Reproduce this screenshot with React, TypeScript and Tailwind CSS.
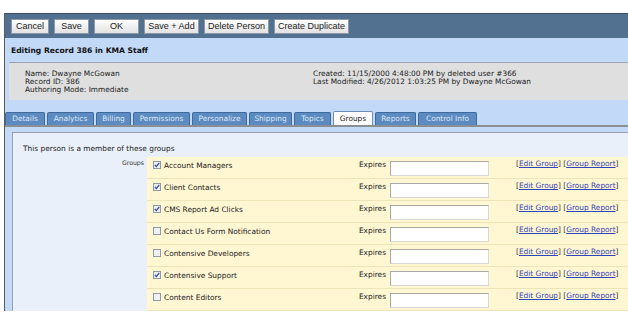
import React from "react";

const buttons = ["Cancel", "Save", "OK", "Save + Add", "Delete Person", "Create Duplicate"];
const buttonWidths = ["w-[38px]", "w-[35px]", "w-[45px]", "w-[55px]", "w-[65px]", "w-[75px]"];

const tabs = [
  { name: "Details", w: "w-[40px]" },
  { name: "Analytics", w: "w-[47px]" },
  { name: "Billing", w: "w-[35px]" },
  { name: "Permissions", w: "w-[57px]" },
  { name: "Personalize", w: "w-[55px]" },
  { name: "Shipping", w: "w-[43px]" },
  { name: "Topics", w: "w-[37px]" },
  { name: "Groups", w: "w-[40px]", active: true },
  { name: "Reports", w: "w-[41px]" },
  { name: "Control Info", w: "w-[59px]" },
];

const groups = [
  { name: "Account Managers", checked: true },
  { name: "Client Contacts", checked: true },
  { name: "CMS Report Ad Clicks", checked: true },
  { name: "Contact Us Form Notification", checked: false },
  { name: "Contensive Developers", checked: false },
  { name: "Contensive Support", checked: true },
  { name: "Content Editors", checked: false },
];

const CheckBox = ({ checked }: { checked: boolean }) => (
  <span className="flex h-[8px] w-[8px] shrink-0 items-center justify-center border border-[#8f9aa6] bg-[#eef0f4]">
    {checked && (
      <svg width="6" height="6" viewBox="0 0 6 6">
        <path d="M0.8 3 L2.3 4.6 L5.2 1" fill="none" stroke="#3b4fa3" strokeWidth="1.3" />
      </svg>
    )}
  </span>
);

const GroupRow = ({ name, checked }: { name: string; checked: boolean }) => (
  <div className="flex h-[22px] items-start border-b border-[#efe3b8] bg-[#fff6d2]">
    <div className="flex w-[210px] items-center gap-[3px] pl-[6px] pt-[4px]">
      <CheckBox checked={checked} />
      <span>{name}</span>
    </div>
    <div className="w-[29px] pt-[4px] text-right">Expires</div>
    <div className="ml-[4px] mt-[4px] h-[15px] w-[99px] border border-[#a8a8a8] border-b-[#d8d8d8] border-r-[#d8d8d8] bg-white" />
    <div className="ml-[27px] pt-[3px] text-[#333]">
      [<span className="text-[#3344bb] underline">Edit Group</span>]{" "}
      [<span className="text-[#3344bb] underline">Group Report</span>]
    </div>
  </div>
);

export default function App() {
  return (
    <div
      className="h-[323px] w-[628px] overflow-hidden bg-white text-[7.4px] leading-none text-[#222]"
      style={{ fontFamily: '"DejaVu Sans", Verdana, sans-serif' }}
    >
      <div className="h-[13px]" />
      <div className="ml-[4px] border-l border-[#5a5a5a]">
        {/* toolbar */}
        <div className="flex h-[25px] items-center gap-[5px] border-t border-[#3c5068] bg-[#52708f] pl-[6px] pt-[1px]">
          {buttons.map((b, i) => (
            <div
              key={b}
              className={`${buttonWidths[i]} flex h-[15px] items-center justify-center border border-[#8c9aa8] bg-gradient-to-b from-[#ffffff] to-[#e2e2e2] text-[9px] text-[#222]`}
              style={{ fontFamily: '"Liberation Sans", Arial, sans-serif' }}
            >
              {b}
            </div>
          ))}
        </div>
        {/* header */}
        <div className="bg-[#c3d9f8]">
          <div className="flex h-[24px] items-center pl-[6px] pt-[1px] text-[7.6px] font-bold text-[#111]">
            Editing Record 386 in KMA Staff
          </div>
          <div className="ml-[4px] flex h-[38px] border-t border-[#9aa3ad] bg-[#dfdfdf] pl-[16px] pt-[7px] text-[#222]">
            <div className="flex w-[288px] flex-col gap-[0.5px] leading-[7.6px]">
              <span>Name: Dwayne McGowan</span>
              <span>Record ID: 386</span>
              <span>Authoring Mode: Immediate</span>
            </div>
            <div className="flex flex-col leading-[7.6px]">
              <span>Created: 11/15/2000 4:48:00 PM by deleted user #366</span>
              <span>Last Modified: 4/26/2012 1:03:25 PM by Dwayne McGowan</span>
            </div>
          </div>
          {/* tabs */}
          <div className="flex h-[27px] items-end gap-[2px] border-b-2 border-[#8a8f96] pl-0">
            {tabs.map((t) => (
              <div
                key={t.name}
                className={`${t.w} flex h-[13px] items-center justify-center rounded-t-[2px] border border-b-0 ${
                  t.active
                    ? "h-[14px] border-[#6d8fb8] bg-white text-[#222]"
                    : "border-[#3e6a9c] bg-[#5b8bc0] text-[#dfe9f6]"
                }`}
              >
                {t.name}
              </div>
            ))}
          </div>
        </div>
        {/* content */}
        <div className="bg-[#c3d9f8] pb-0 pl-[7px] pt-[5px]">
          <div className="h-[179px] border-l border-t border-[#9aa0a8] bg-[#e9f0f9]">
            <div className="pl-[10px] pt-[12px]">This person is a member of these groups</div>
            <div className="mt-[5px] flex">
              <div className="w-[134px] pr-[3px] pt-[3px] text-right text-[6.2px] text-[#333]">Groups</div>
              <div className="flex-1">
                {groups.map((g) => (
                  <GroupRow key={g.name} name={g.name} checked={g.checked} />
                ))}
              </div>
            </div>
          </div>
        </div>
      </div>
    </div>
  );
}
